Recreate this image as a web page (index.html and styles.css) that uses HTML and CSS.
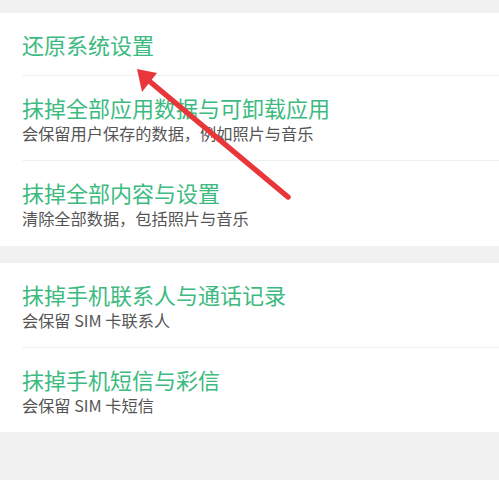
FILE: index.html
```html
<!DOCTYPE html>
<html lang="zh-CN">
<head>
    <meta charset="UTF-8">
    <meta name="viewport" content="width=device-width, initial-scale=1.0">
    <title>还原系统设置</title>
    <link rel="stylesheet" href="styles.css">
</head>
<body>
    <div class="page">
        <div class="group">
            <div class="item single">
                <div class="title">还原系统设置</div>
            </div>
            <div class="item">
                <div class="title">抹掉全部应用数据与可卸载应用</div>
                <div class="sub">会保留用户保存的数据，例如照片与音乐</div>
            </div>
            <div class="item last">
                <div class="title">抹掉全部内容与设置</div>
                <div class="sub">清除全部数据，包括照片与音乐</div>
            </div>
        </div>

        <div class="group">
            <div class="item">
                <div class="title">抹掉手机联系人与通话记录</div>
                <div class="sub">会保留 SIM 卡联系人</div>
            </div>
            <div class="item last short">
                <div class="title">抹掉手机短信与彩信</div>
                <div class="sub">会保留 SIM 卡短信</div>
            </div>
        </div>

        <!-- annotation arrow drawn over the list -->
        <svg class="arrow" width="499" height="480" viewBox="0 0 499 480">
            <line x1="288" y1="197" x2="148" y2="80" stroke="#e8363a" stroke-width="5.5" stroke-linecap="round"/>
            <polygon points="137,69 157,73 142,92" fill="#e8363a"/>
        </svg>
    </div>
</body>
</html>
```

FILE: styles.css
```css
body {
    margin: 0;
    padding: 0;
    background-color: #f1f1f1;
    font-family: "Noto Sans CJK SC", "Noto Sans", sans-serif;
}

.page {
    position: relative;
    padding-top: 13px;
    min-height: 467px;
}

.group {
    background-color: #fff;
    margin-bottom: 17px;
}

.item {
    margin-left: 22px;
    padding: 15px 0 17px;
    border-bottom: 1px solid #f0f0f0;
}

.item.single {
    padding: 15px 0 15px;
}

.item.last {
    border-bottom: none;
    padding-bottom: 18px;
}

.item.short {
    padding-bottom: 17px;
}

.title {
    font-size: 22px;
    line-height: 32px;
    color: #3dba7f;
}

.sub {
    font-size: 16.2px;
    line-height: 20px;
    color: #555;
}

.arrow {
    position: absolute;
    top: 0;
    left: 0;
}
```
